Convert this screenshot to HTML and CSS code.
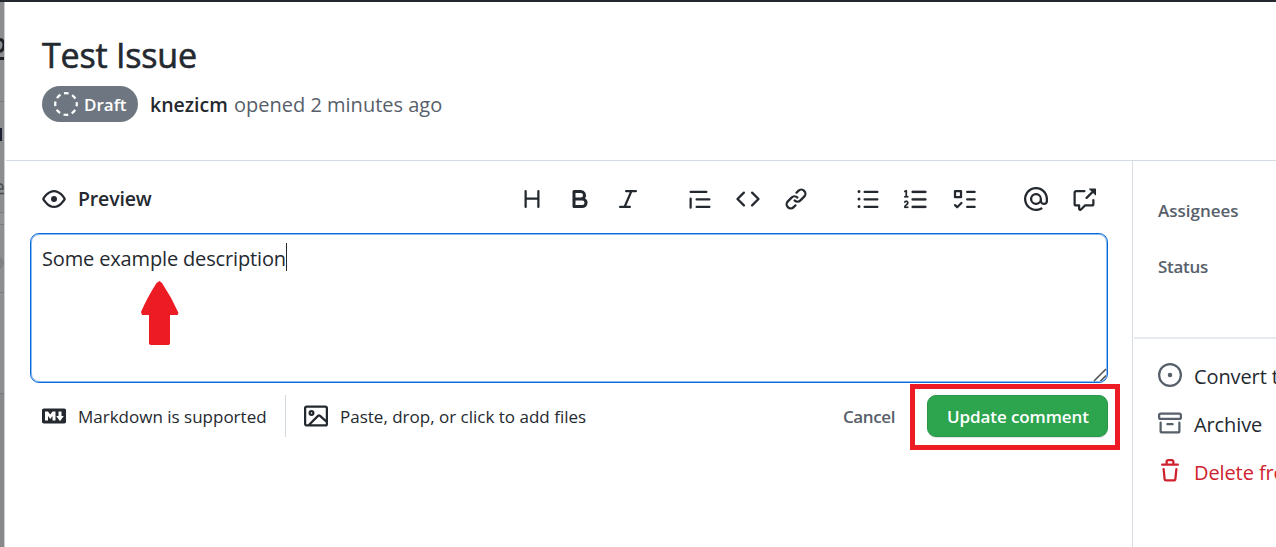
FILE: index.html
```
<!DOCTYPE html>
<html lang="en">
<head>
<meta charset="utf-8">
<title>Test Issue</title>
<link rel="stylesheet" href="styles.css">
</head>
<body>
<div class="app">
  <div class="backdrop">
    <svg width="4" height="545" fill="none">
      <rect width="4" height="211" fill="#8b8d8f"/><rect y="211" width="4" height="11" fill="#919395"/><rect y="222" width="4" height="170" fill="#8d8f91"/><rect y="392" width="4" height="153" fill="#868889"/>
      <path d="M0 37.5Q4 38 4 43T0 49.500M0 56.500H4" stroke="#1d2024" stroke-width="3"/>
      <path d="M0 99.500H4M0 210.500H4M0 222.500H4M0 290.500H4M0 391.500H4" stroke="#787b7e"/>
      <path d="M1 126V139" stroke="#1c2030" stroke-width="2"/>
      <path d="M0 182Q3 182 3 187H0M0 191.500H4" stroke="#46494d" stroke-width="1.500"/>
      <circle cx="-2" cy="261" r="6" fill="#7f8183"/>
    </svg>
  </div>
  <section class="panel">
    <header class="head">
      <h1 class="title">Test Issue</h1>
      <div class="meta">
        <span class="badge"><svg class="icon" viewBox="0 0 16 16"><circle cx="8" cy="8" r="7.2" fill="none" stroke="currentColor" stroke-width="1.500" stroke-dasharray="3.2 2.455" stroke-dashoffset="1.600" stroke-linecap="butt"/></svg><span class="badge-text">Draft</span></span>
        <span class="author">knezicm</span>
        <span class="opened">opened 2 minutes ago</span>
      </div>
    </header>
    <div class="body">
      <main class="editor">
        <div class="toolbar">
          <div class="preview"><svg class="icon" viewBox="0 0 16 16"><path d="M1.679 7.932c.412-.621 1.242-1.75 2.366-2.717C5.175 4.242 6.527 3.5 8 3.5c1.473 0 2.824.742 3.955 1.715 1.124.967 1.954 2.096 2.366 2.717a.119.119 0 010 .136c-.412.621-1.242 1.75-2.366 2.717C10.825 11.758 9.473 12.5 8 12.5c-1.473 0-2.824-.742-3.955-1.715C2.92 9.818 2.09 8.69 1.679 8.068a.119.119 0 010-.136zM8 2c-1.981 0-3.67.992-4.933 2.078C1.797 5.169.88 6.423.43 7.1a1.619 1.619 0 000 1.798c.45.678 1.367 1.932 2.637 3.024C4.329 13.008 6.019 14 8 14c1.981 0 3.67-.992 4.933-2.078 1.27-1.091 2.187-2.345 2.637-3.023a1.619 1.619 0 000-1.798c-.45-.678-1.367-1.932-2.637-3.023C11.671 2.992 9.981 2 8 2zm0 8a2 2 0 100-4 2 2 0 000 4z"/></svg><span class="preview-text">Preview</span></div>
          <div class="tools">
            <div class="group">
              <svg class="icon" viewBox="0 0 16 16"><path d="M3.75 2a.75.75 0 01.75.75V7h7V2.750a.75.75 0 011.500 0v10.500a.75.75 0 01-1.500 0V8.500h-7v4.750a.75.75 0 01-1.500 0V2.750A.75.75 0 013.750 2z"/></svg>
              <svg class="icon" viewBox="0 0 16 16"><path fill-rule="evenodd" d="M4 2a1 1 0 00-1 1v10a1 1 0 001 1h5.500a3.500 3.500 0 001.852-6.470A3.500 3.500 0 008.500 2H4zm4.500 5a1.500 1.500 0 100-3H5v3h3.500zM5 9v3h4.500a1.500 1.500 0 000-3H5z"/></svg>
              <svg class="icon" viewBox="0 0 16 16"><path d="M6 2.750A.75.75 0 016.750 2h6.500a.75.75 0 010 1.500h-2.505l-3.858 9H9.250a.75.75 0 010 1.500h-6.500a.75.75 0 010-1.500h2.505l3.858-9H6.750A.75.75 0 016 2.750z"/></svg>
            </div>
            <div class="group">
              <svg class="icon" viewBox="0 0 16 16"><path d="M1.75 2.500a.75.75 0 000 1.500h10.500a.75.75 0 000-1.500H1.750zm4 5a.75.75 0 000 1.500h8.500a.75.75 0 000-1.500h-8.500zm0 5a.75.75 0 000 1.500h8.500a.75.75 0 000-1.500h-8.500zM2.500 7.750a.75.75 0 00-1.500 0v6a.75.75 0 001.500 0v-6z"/></svg>
              <svg class="icon" viewBox="0 0 16 16"><path d="M4.720 3.220a.75.75 0 011.060 1.060L2.060 8l3.720 3.720a.75.75 0 11-1.060 1.060L.470 8.530a.75.75 0 010-1.060l4.250-4.250zm6.560 0a.75.75 0 10-1.060 1.060L13.940 8l-3.720 3.720a.75.75 0 101.060 1.060l4.250-4.250a.75.75 0 000-1.060l-4.250-4.250z"/></svg>
              <svg class="icon" viewBox="0 0 16 16"><path d="M7.775 3.275a.75.75 0 001.060 1.060l1.250-1.250a2 2 0 112.830 2.830l-2.500 2.500a2 2 0 01-2.830 0 .75.75 0 00-1.060 1.060 3.500 3.500 0 004.950 0l2.500-2.500a3.500 3.500 0 00-4.950-4.950l-1.250 1.250zm-4.690 9.640a2 2 0 010-2.830l2.500-2.500a2 2 0 012.830 0 .75.75 0 001.060-1.060 3.500 3.500 0 00-4.950 0l-2.500 2.500a3.500 3.500 0 004.950 4.950l1.250-1.250a.75.75 0 00-1.060-1.060l-1.250 1.250a2 2 0 01-2.830 0z"/></svg>
            </div>
            <div class="group">
              <svg class="icon" viewBox="0 0 16 16"><path d="M2 4a1 1 0 100-2 1 1 0 000 2zm3.750-1.500a.75.75 0 000 1.500h8.500a.75.75 0 000-1.500h-8.500zm0 5a.75.75 0 000 1.500h8.500a.75.75 0 000-1.500h-8.500zm0 5a.75.75 0 000 1.500h8.500a.75.75 0 000-1.500h-8.500zM3 8a1 1 0 11-2 0 1 1 0 012 0zm-1 6a1 1 0 100-2 1 1 0 000 2z"/></svg>
              <svg class="icon" viewBox="0 0 16 16"><path stroke="currentColor" stroke-width=".15" d="M2.003 2.500a.5.5 0 00-.723-.447l-1.003.5a.5.5 0 00.446.895l.280-.140V6H.500a.5.5 0 000 1h2.006a.5.5 0 100-1h-.503V2.500zM5 3.250a.75.75 0 01.75-.75h8.500a.75.75 0 010 1.500h-8.500A.75.75 0 015 3.250zm0 5a.75.75 0 01.75-.75h8.500a.75.75 0 010 1.500h-8.500A.75.75 0 015 8.250zm0 5a.75.75 0 01.75-.75h8.500a.75.75 0 010 1.500h-8.500a.75.75 0 01-.75-.75zM.924 10.320l.003-.004a.851.851 0 01.144-.153A.66.66 0 011.500 10c.195 0 .306.068.374.146a.57.57 0 01.128.376c0 .453-.269.682-.8 1.078l-.035.025C.692 11.980 0 12.495 0 13.500a.5.5 0 00.5.5h2.003a.5.5 0 000-1H1.146c.132-.197.351-.372.654-.597l.047-.035c.470-.350 1.156-.858 1.156-1.845 0-.365-.118-.744-.377-1.038-.268-.303-.658-.484-1.126-.484-.480 0-.840.202-1.068.392a1.858 1.858 0 00-.348.384l-.007.011a.5.5 0 00.847.533z"/></svg>
              <svg class="icon" viewBox="0 0 16 16"><g fill="none" stroke="currentColor" stroke-width="1.500" stroke-linecap="round" stroke-linejoin="round"><path d="M2 2.750h4v4h-4zM10.100 3.250h5M10.100 8.250h5M10.100 13.250h5M2.050 12.100l1.400 1.400L6.300 10.700"/></g></svg>
            </div>
            <div class="group">
              <svg class="icon" viewBox="0 0 16 16"><path fill-rule="evenodd" d="M4.750 2.370a6.500 6.500 0 006.500 11.260.75.75 0 01.75 1.298 8 8 0 113.994-7.273.754.754 0 01.006.095v1.500a2.750 2.750 0 01-5.072 1.475A4 4 0 1112 8v1.250a1.250 1.250 0 002.500 0V7.867a6.500 6.500 0 00-9.750-5.496zM10.500 8a2.500 2.500 0 10-5 0 2.500 2.500 0 005 0z"/></svg>
              <svg class="icon" viewBox="0 0 16 16"><path d="M16 1.250v4.146a.25.25 0 01-.427.177L14.030 4.030l-3.750 3.750a.75.75 0 11-1.060-1.060l3.750-3.750-1.543-1.543A.25.25 0 0111.604 1h4.146a.25.25 0 01.25.25zM2.750 3.500a.25.25 0 00-.25.25v7.500c0 .138.112.25.25.25h2a.75.75 0 01.75.75v2.190l2.720-2.720a.75.75 0 01.530-.220h4.500a.25.25 0 00.25-.25v-2.500a.75.75 0 111.500 0v2.500A1.750 1.750 0 0113.250 13H9.060l-2.573 2.573A1.457 1.457 0 014 14.543V13H2.750A1.750 1.750 0 011 11.250v-7.500C1 2.784 1.784 2 2.750 2h5.500a.75.75 0 010 1.500h-5.500z"/></svg>
            </div>
          </div>
        </div>
        <div class="field">
          <span class="field-text">Some example description</span><i class="caret"></i>
          <svg class="arrow" width="38" height="66"><path d="M18.500 1 L21 3 Q31 18 37.500 33 L36.500 35 H29 V64 L27.500 65 H9.500 L8 64 V35 H1 L0 32 Q6 18 15.500 3Z" fill="#ed1c24"/></svg>
          <svg class="grip" width="14" height="14"><path d="M1 13L13 1M7.500 13L13 7.500" stroke="#555" stroke-width="1.600"/></svg>
        </div>
        <div class="foot">
          <svg class="icon" viewBox="0 0 16 16"><path fill-rule="evenodd" d="M14.850 3H1.150C.520 3 0 3.520 0 4.150v7.690C0 12.480.520 13 1.150 13h13.690c.640 0 1.150-.520 1.150-1.150v-7.700C16 3.520 15.480 3 14.850 3zM9 11H7V8L5.500 9.920 4 8v3H2V5h2l1.500 2L7 5h2v6zm2.990.5L9.500 8H11V5h2v3h1.500l-2.510 3.500z"/></svg>
          <span class="md-text">Markdown is supported</span>
          <span class="rule"></span>
          <svg class="icon" viewBox="0 0 16 16"><path fill-rule="evenodd" d="M1.750 2.500a.25.25 0 00-.25.25v10.500c0 .138.112.25.25.25h.940a.76.76 0 01.030-.030l6.077-6.078a1.750 1.750 0 012.412-.060L14.500 10.310V2.750a.25.25 0 00-.25-.25H1.750zm12.500 11H4.810l5.048-5.047a.25.25 0 01.344-.009l4.298 3.889v.917a.25.25 0 01-.25.25zm1.750-.25V2.750A1.750 1.750 0 0014.250 1H1.750A1.750 1.750 0 000 2.750v10.500C0 14.216.784 15 1.750 15h12.500A1.750 1.750 0 0016 13.250zM5.500 6a.5.5 0 11-1 0 .5.5 0 011 0zM7 6a2 2 0 11-4 0 2 2 0 014 0z"/></svg>
          <span class="files-text">Paste, drop, or click to add files</span>
          <span class="cancel">Cancel</span>
          <div class="submit"><span class="submit-text">Update comment</span><i class="highlight"></i></div>
        </div>
      </main>
      <aside class="side">
        <div class="props">
          <div class="prop assignees">Assignees</div>
          <div class="prop status">Status</div>
        </div>
        <div class="actions">
          <div class="action"><svg class="icon" viewBox="0 0 16 16"><circle cx="8" cy="8" r="7.250" fill="none" stroke="currentColor" stroke-width="1.500"/><circle cx="8" cy="8" r="1.500"/></svg><span class="action-text">Convert to issue</span></div>
          <div class="action"><svg class="icon" viewBox="0 0 16 16"><path fill-rule="evenodd" d="M1.750 2.500a.25.25 0 00-.25.25v1.500c0 .138.112.25.25.25h12.500a.25.25 0 00.25-.25v-1.500a.25.25 0 00-.25-.25H1.750zM0 2.750C0 1.784.784 1 1.750 1h12.500c.966 0 1.750.784 1.750 1.750v1.500A1.750 1.750 0 0114.250 6H1.750A1.750 1.750 0 010 4.250v-1.500zM1.750 7a.75.75 0 01.75.75v5.500c0 .138.112.25.25.25h10.500a.25.25 0 00.25-.25v-5.500a.75.75 0 011.500 0v5.500A1.750 1.750 0 0113.250 15H2.750A1.750 1.750 0 011 13.250v-5.500A.75.75 0 011.750 7zm4.500 1a.75.75 0 000 1.500h3.500a.75.75 0 100-1.500h-3.500z"/></svg><span class="action-text">Archive</span></div>
          <div class="action danger"><svg class="icon" viewBox="0 0 16 16"><path fill-rule="evenodd" d="M6.500 1.750a.25.25 0 01.25-.25h2.500a.25.25 0 01.25.25V3h-3V1.750zm4.500 0V3h2.250a.75.75 0 010 1.500H2.750a.75.75 0 010-1.500H5V1.750C5 .784 5.784 0 6.750 0h2.500C10.216 0 11 .784 11 1.750zM4.496 6.675a.75.75 0 10-1.492.150l.660 6.600A1.750 1.750 0 005.405 15h5.190c.900 0 1.652-.681 1.741-1.576l.660-6.600a.75.75 0 00-1.492-.149l-.660 6.600a.25.25 0 01-.249.225h-5.190a.25.25 0 01-.249-.225l-.660-6.600z"/></svg><span class="action-text">Delete from project</span></div>
        </div>
      </aside>
    </div>
  </section>
</div>
</body>
</html>
```
FILE: styles.css
```
* { box-sizing: border-box; }
body { margin: 0; overflow: hidden; background: #fff; color: #24292f; font-family: "Open Sans", "Noto Sans", sans-serif; white-space: nowrap; }
.app { display: flex; width: 1276px; height: 547px; border-top: 2px solid #24292f; overflow: hidden; }
.backdrop { width: 4px; flex: none; overflow: hidden; background: #8b8d8f; }
.backdrop svg { display: block; }
.panel { flex: 1; min-width: 0; display: flex; flex-direction: column; border-left: 1px solid #ccd0d6; padding-left: 1px; }
.icon { width: 24px; height: 24px; flex: none; display: block; fill: currentColor; }
.head { height: 159px; flex: none; border-bottom: 1px solid #d5dbe2; padding: 29px 0 0 36px; }
.title { margin: 0; height: 48px; line-height: 48px; font-size: 34px; font-weight: 500; letter-spacing: -0.2px; -webkit-text-stroke: 0.6px currentColor; }
.meta { display: flex; align-items: center; height: 36px; margin-top: 7px; font-size: 20px; line-height: 36px; }
.badge { display: flex; align-items: center; width: 96px; height: 36px; border-radius: 18px; background: #6e7781; color: #fff; padding-left: 12px; gap: 6px; flex: none; }
.badge-text { font-size: 17px; font-weight: 600; padding-top: 1px; }
.author { width: 84px; margin-left: 12px; font-weight: 600; font-size: 19.500px; flex: none; padding-top: 2px; }
.opened { color: #57606a; padding-top: 2px; }
.body { flex: 1; display: flex; min-height: 0; }
.editor { width: 1126px; flex: none; padding: 24px 24px 0; }
.toolbar { height: 48px; display: flex; justify-content: space-between; padding: 2px 12px 0 12px; }
.preview { display: flex; gap: 12px; height: 24px; line-height: 24px; font-size: 19.500px; font-weight: 600; letter-spacing: -0.15px; }
.tools { display: flex; gap: 48px; }
.group { display: flex; gap: 24px; }
.field { position: relative; width: 1078px; height: 150px; border: 1px solid #0969da; border-radius: 9px; box-shadow: inset 0 0 0 1px #8cbcf0; padding: 9px 11px; display: flex; font-size: 20px; line-height: 32px; }
.field-text { height: 30px; letter-spacing: -0.15px; }
.caret { width: 1px; height: 28px; background: #24292f; }
.arrow { position: absolute; left: 110px; top: 46px; }
.grip { position: absolute; right: 0; bottom: 0; }
.foot { display: flex; align-items: center; height: 42px; margin-top: 12px; padding-left: 12px; font-size: 17px; }
.md-text { width: 207px; margin-left: 12px; }
.rule { width: 1px; height: 42px; background: #d0d7de; margin-right: 18px; }
.files-text { width: 503px; margin-left: 12px; }
.cancel { width: 84px; color: #57606a; font-weight: 600; letter-spacing: -0.4px; }
.submit { position: relative; width: 181px; height: 42px; flex: none; background: #2da44e; border: 1px solid #2a9648; border-radius: 9px; color: #fff; font-weight: 600; line-height: 42px; letter-spacing: -0.1px; padding-left: 19px; box-shadow: 0 1px 1px #1b1f2420; }
.highlight { position: absolute; left: -18px; top: -12px; width: 210px; height: 66px; border: 5px solid #ed1c24; }
.side { flex: 1; min-width: 0; border-left: 1px solid #d8dee4; padding-left: 1px; overflow: hidden; }
.props { height: 178px; border-bottom: 2px solid #e6eaee; padding: 38px 0 0 24px; color: #57606a; font-size: 17px; font-weight: 600; line-height: 24px; }
.prop { height: 56px; }
.status { letter-spacing: -0.3px; }
.actions { padding: 24px 0 0 24px; color: #57606a; font-size: 20px; line-height: 28px; }
.action { display: flex; gap: 12px; height: 48px; }
.action-text { color: #24292f; letter-spacing: -0.1px; }
.danger, .danger .action-text { color: #cf222e; }
```
